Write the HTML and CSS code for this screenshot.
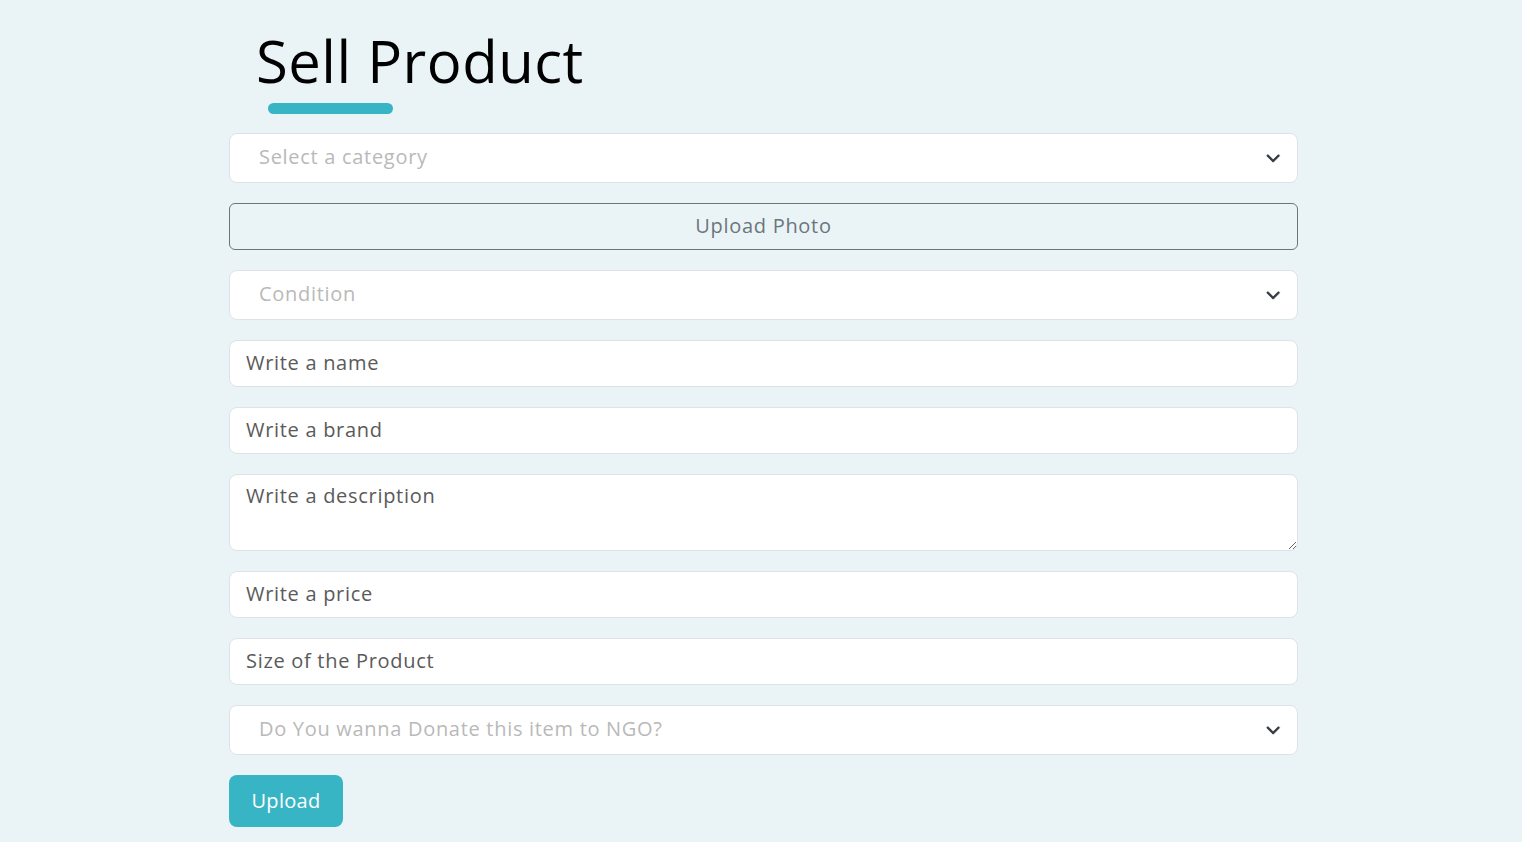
FILE: index.html
```html
<!DOCTYPE html>
<html>
<head>
<meta charset="utf-8">
<link rel="stylesheet" href="styles.css">
</head>
<body>
<main class="page">
  <header class="head">
    <h1 class="title">Sell Product</h1>
    <div class="underline"></div>
  </header>
  <form class="form">
    <div class="select-wrap">
      <select class="field select"><option>Select a category</option></select>
      <svg class="chev" width="16" height="10" viewBox="0 0 16 10"><path d="M2 2l6 6 6-6" fill="none" stroke="#aaa" stroke-width="2" transform="translate(0.7,0)"/><path d="M2 2l6 6 6-6" fill="none" stroke="#343a40" stroke-width="2"/></svg>
    </div>
    <button type="button" class="photo">Upload Photo</button>
    <div class="select-wrap">
      <select class="field select"><option>Condition</option></select>
      <svg class="chev" width="16" height="10" viewBox="0 0 16 10"><path d="M2 2l6 6 6-6" fill="none" stroke="#aaa" stroke-width="2" transform="translate(0.7,0)"/><path d="M2 2l6 6 6-6" fill="none" stroke="#343a40" stroke-width="2"/></svg>
    </div>
    <input class="field input" placeholder="Write a name">
    <input class="field input" placeholder="Write a brand">
    <textarea class="field area" placeholder="Write a description"></textarea>
    <input class="field input" placeholder="Write a price">
    <input class="field input" placeholder="Size of the Product">
    <div class="select-wrap">
      <select class="field select"><option>Do You wanna Donate this item to NGO?</option></select>
      <svg class="chev" width="16" height="10" viewBox="0 0 16 10"><path d="M2 2l6 6 6-6" fill="none" stroke="#aaa" stroke-width="2" transform="translate(0.7,0)"/><path d="M2 2l6 6 6-6" fill="none" stroke="#343a40" stroke-width="2"/></svg>
    </div>
    <div class="actions">
      <button type="button" class="submit">Upload</button>
    </div>
  </form>
</main>
</body>
</html>
```

FILE: styles.css
```css
* { box-sizing: border-box; }
html, body { margin: 0; padding: 0; }
body {
  background: #eaf4f7;
  font-family: "Open Sans", "Noto Sans", sans-serif;
  height: 842px;
  overflow: hidden;
}
.page {
  width: 1069px;
  margin-left: 229px;
  padding-top: 26px;
}
.head {
  display: flex;
  flex-direction: column;
}
.title {
  margin: 0 0 0 27px;
  font-size: 58px;
  font-weight: 400;
  line-height: 70px;
  color: #000;
  letter-spacing: 0.5px;
}
.underline {
  margin: 7px 0 0 39px;
  width: 125px;
  height: 11px;
  border-radius: 6px;
  background: #38b5c4;
}
.form {
  margin-top: 19px;
  display: flex;
  flex-direction: column;
  gap: 20px;
}
.field {
  width: 100%;
  background: #fff;
  border: 1px solid #dde3e6;
  border-radius: 8px;
  font-family: inherit;
  font-size: 20px;
  letter-spacing: 0.7px;
  outline: none;
  display: block;
  margin: 0;
}
.select-wrap { position: relative; }
.select {
  appearance: none;
  -webkit-appearance: none;
  height: 50px;
  padding: 0 40px 3px 29px;
  color: #b9b9b9;
}
.chev {
  position: absolute;
  right: 17px;
  top: 20px;
  pointer-events: none;
}
.input {
  height: 47px;
  padding: 0 16px 2px;
  color: #555;
}
.input::placeholder, .area::placeholder { color: #5a5a5a; opacity: 1; }
.area {
  height: 77px;
  padding: 7px 16px;
  resize: vertical;
  color: #555;
  line-height: 28px;
}
.photo {
  height: 47px;
  width: 100%;
  background: transparent;
  border: 1px solid #6c757d;
  border-radius: 6px;
  color: #6c757d;
  font-family: inherit;
  font-size: 20px;
  letter-spacing: 0.7px;
  padding: 0 0 2px;
}
.actions { display: flex; }
.submit {
  height: 52px;
  width: 114px;
  padding: 0 0 2px;
  border: none;
  border-radius: 8px;
  background: #38b5c4;
  color: #fff;
  font-family: inherit;
  font-size: 20px;
  font-weight: 500;
  letter-spacing: 0.3px;
}
```
